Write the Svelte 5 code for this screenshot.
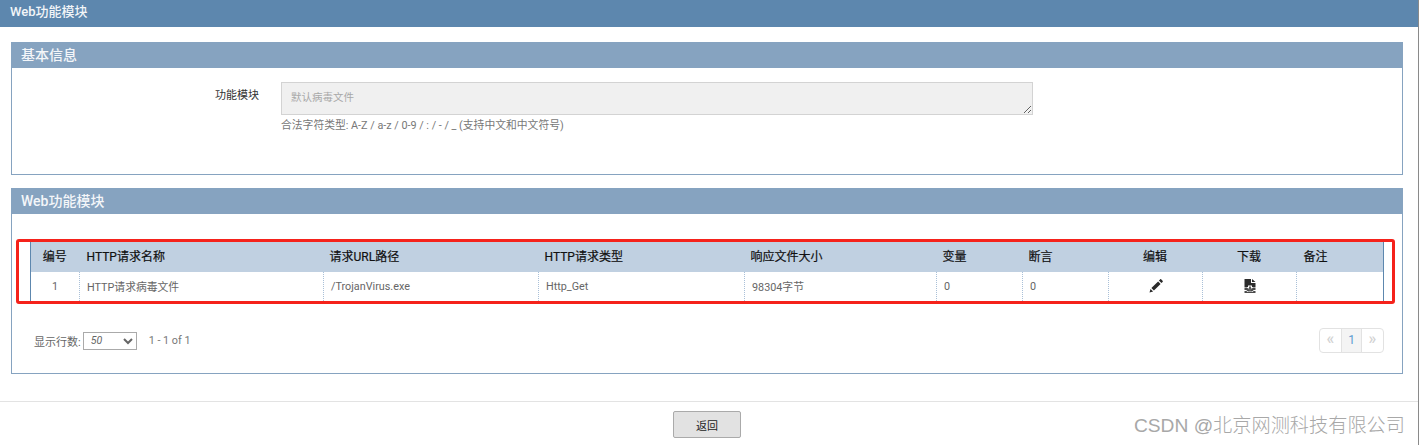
<script>
  const cols = [
    { label: '编号', w: 49, cls: 'c' },
    { label: 'HTTP请求名称', w: 244, cls: 'first' },
    { label: '请求URL路径', w: 215 },
    { label: 'HTTP请求类型', w: 206 },
    { label: '响应文件大小', w: 192 },
    { label: '变量', w: 86 },
    { label: '断言', w: 86 },
    { label: '编辑', w: 94, cls: 'c' },
    { label: '下载', w: 94, cls: 'c' },
    { label: '备注', w: 87, cls: 'first' }
  ];
  const row = ['1', 'HTTP请求病毒文件', '/TrojanVirus.exe', 'Http_Get', '98304字节', '0', '0'];
</script>

<div class="page">
  <header class="top">Web功能模块</header>

  <section class="panel first">
    <h2>基本信息</h2>
    <div class="form">
      <span class="label">功能模块</span>
      <div class="field">
        <textarea disabled>默认病毒文件</textarea>
        <p class="hint">合法字符类型: A-Z / a-z / 0-9 / : / - / _ (支持中文和中文符号)</p>
      </div>
    </div>
  </section>

  <section class="panel second">
    <h2>Web功能模块</h2>
    <div class="mark">
      <table>
        <colgroup>
          {#each cols as col}<col style="width:{col.w}px" />{/each}
        </colgroup>
        <thead>
          <tr>{#each cols as col}<th class={col.cls}>{col.label}</th>{/each}</tr>
        </thead>
        <tbody>
          <tr>
            {#each row as cell, i}<td class:c={i === 0}>{cell}</td>{/each}
            <td class="c">
              <svg class="icon" width="16" height="16" viewBox="0 0 16 16" aria-label="编辑">
                <path d="M1.500 14.500l1-3.600 2.600 2.600zM3.400 10.100l6.700-6.700 2.500 2.500-6.700 6.700zM10.900 2.600l1.200-1.200c.4-.4.9-.4 1.200 0l1.300 1.300c.4.300.4.800 0 1.200l-1.200 1.200z" fill="#2a2a2a" />
              </svg>
            </td>
            <td class="c">
              <svg class="icon" width="12" height="14" viewBox="0 0 12 14" aria-label="下载">
                <path d="M.5 0H7v4h4.500v4H8V6.500H4V8H.5zM8 0l3.500 3H8z" fill="#2b2b2b" />
                <path d="M.5 8.500h2.500L6 11.500 9 8.500h2.500v2.500H9.800L8 12.500H4L2.200 11H.5zM.5 12h2l.8 1h5.400l.8-1h2v2H.5z" fill="#4a4a4a" />
                <path d="M5 7.500h2v2h1.500L6 11.500l-2.500-2H5z" fill="#5a5a5a" />
              </svg>
            </td>
            <td></td>
          </tr>
        </tbody>
      </table>
    </div>

    <div class="pager">
      <div class="rows">
        <span class="rows-label">显示行数:</span>
        <select><option>50</option></select>
        <span class="count">1 - 1 of 1</span>
      </div>
      <div class="pages">
        <span class="pg off">«</span>
        <span class="pg cur">1</span>
        <span class="pg off">»</span>
      </div>
    </div>
  </section>

  <footer class="foot">
    <button type="button">返回</button>
    <span class="wm">CSDN @北京网测科技有限公司</span>
  </footer>
</div>

<style>
  :global(body) { margin: 0; background: #fff; }
  .page {
    width: 1419px; height: 445px; box-sizing: border-box;
    border-right: 1px solid #8a8a8a;
    font-family: Roboto, "Noto Sans CJK SC", sans-serif;
    font-size: 11px; color: #555; overflow: hidden;
  }
  .top {
    height: 27px; background: #5d87ae; color: #f2f5f8;
    font-size: 13px; font-weight: 500; line-height: 23px; padding-left: 10px;
    box-sizing: border-box;
  }
  .panel {
    margin: 15px 15px 0 11px; border: 1px solid #86a3c0; border-top: 0;
    box-sizing: border-box;
  }
  .panel.first { height: 133px; }
  .panel.second { height: 186px; margin-top: 13px; }
  h2 {
    margin: 0 -1px; height: 26px; background: #86a3c0; color: #f4f6f9;
    font-size: 14px; font-weight: 500; line-height: 26px; padding-left: 10px;
  }
  .form { display: flex; padding-top: 14px; }
  .label {
    width: 247px; text-align: right; font-size: 11px; color: #333;
    line-height: 16px; margin-top: 6px;
  }
  .field { margin-left: 22px; }
  textarea {
    display: block; width: 752px; height: 33px; box-sizing: border-box; margin: 0;
    background: #f0f0f0; border: 1px solid #d3d3d3; padding: 6px 9px;
    font: 10.500px Roboto, "Noto Sans CJK SC", sans-serif; color: #a8a8a8; resize: both;
  }
  .hint { margin: 3px 0 0; font-size: 10.800px; line-height: 15px; color: #777; }
  .mark {
    margin: 25px 7px 0 4px; border: 3px solid #f5221b; border-radius: 3px;
    padding: 0 9px 0 11px; height: 65px; box-sizing: border-box;
  }
  table {
    border-collapse: collapse; table-layout: fixed; width: 1354px;
    border-left: 1.500px solid #5d87ae; border-right: 1.500px solid #5d87ae;
  }
  th {
    height: 30px; background: #c0d0e1; color: #111; font-size: 12px; font-weight: 400;
    text-align: left; padding: 0 0 3px 6px; box-sizing: border-box;
    -webkit-text-stroke: 0.2px #111;
  }
  th.first { padding-left: 7px; }
  td {
    height: 29px; padding: 0 0 1px 7px; font-size: 10.800px; color: #666; box-sizing: border-box;
    border-left: 1px dotted #a9c0d8;
  }
  td:first-child { border-left: 0; }
  th.c, td.c { text-align: center; padding-left: 0; }
  th.c { padding-right: 1px; }
  .icon { display: block; margin: 0 auto; }
  .pager {
    display: flex; justify-content: space-between; align-items: center;
    margin: 24px 18px 0 22px;
  }
  .rows { display: flex; align-items: center; }
  .rows-label { font-size: 11px; color: #666; }
  select {
    width: 54px; height: 18px; margin: 0 12px 0 2px; padding: 0 0 0 3px;
    border: 1px solid #aaa; background: #fff; border-radius: 0;
    font: italic 10.500px Roboto, sans-serif; color: #666;
  }
  .count { font-size: 10.800px; color: #777; }
  .pages {
    display: flex; height: 25px; border: 1.500px solid #e2e2e2; border-radius: 4px;
    box-sizing: border-box; overflow: hidden;
  }
  .pg {
    width: 21px; box-sizing: border-box; text-align: center; line-height: 20px; font-size: 16px; font-weight: 500; color: #d2d2d2;
  }
  .pg.cur {
    background: #f4f4f4; color: #5d9bd0; font-size: 12px; line-height: 22px; font-weight: 400;
    border-left: 1px solid #e2e2e2; border-right: 1px solid #e2e2e2;
  }
  .foot {
    margin-top: 27px; border-top: 1px solid #e3e3e3; height: 44px;
    display: flex; align-items: flex-start; justify-content: center;
    position: relative; box-sizing: border-box; padding: 9px 4px 0 0;
  }
  button {
    width: 68px; height: 27px; box-sizing: border-box;
    background: #e2e2e2; border: 1px solid #aaa; border-radius: 2px;
    font: 11px Roboto, "Noto Sans CJK SC", sans-serif; color: #222; padding: 0;
  }
  .wm {
    position: absolute; right: 13px; top: 11px; font-size: 19.200px; line-height: 26px;
    font-weight: 300; color: #a8a8a8; font-family: "Liberation Sans", "Noto Sans CJK SC", sans-serif; white-space: nowrap;
  }
</style>
